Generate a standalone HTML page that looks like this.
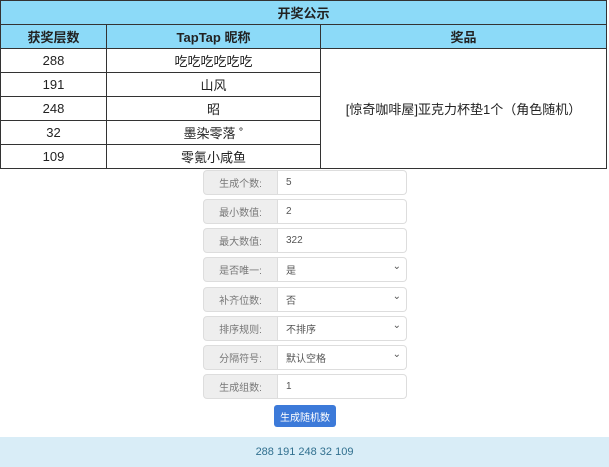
<!DOCTYPE html>
<html><head><meta charset="utf-8"><style>
*{box-sizing:border-box;margin:0;padding:0}
body{width:609px;height:467px;background:#fff;font-family:"Liberation Sans","Noto Sans CJK SC",sans-serif;position:relative;overflow:hidden}
table{position:absolute;left:0;top:0;width:607px;border-collapse:collapse;font-size:13px;color:#222}
td,th{border:1px solid #333;text-align:center;height:24px;padding:0}
th{background:#8cdaf8;font-weight:bold}
.f{position:absolute;left:203px;width:204px;height:25px;display:flex;font-size:10px;color:#555}
.l{width:75px;background:#eee;border:1px solid #ddd;border-radius:4px 0 0 4px;display:flex;align-items:center;justify-content:center;color:#777}
.v{flex:1;border:1px solid #ddd;border-left:none;border-radius:0 4px 4px 0;display:flex;align-items:center;padding-left:8px;position:relative}
.s::after{content:"⌄";position:absolute;right:5px;top:3px;font-size:10px}
.btn{position:absolute;left:274px;top:405px;width:62px;height:22px;background:#3c7ad9;color:#fff;font-size:10px;border-radius:3px;display:flex;align-items:center;justify-content:center}
.bar{position:absolute;left:0;top:437px;width:609px;height:30px;background:#d9edf7;color:#31708f;display:flex;align-items:center;justify-content:center;font-size:11px}
</style></head><body>
<table>
<tr><th colspan="3" style="height:24px">开奖公示</th></tr>
<tr><th style="width:106px;height:23px">获奖层数</th><th style="width:214px">TapTap 昵称</th><th>奖品</th></tr>
<tr><td>288</td><td>吃吃吃吃吃吃</td><td rowspan="5">[惊奇咖啡屋]亚克力杯垫1个（角色随机）</td></tr>
<tr><td>191</td><td>山风</td></tr>
<tr><td>248</td><td>昭</td></tr>
<tr><td>32</td><td>墨染零落 ˚</td></tr>
<tr><td>109</td><td>零氪小咸鱼</td></tr>
</table>
<div class="f" style="top:170px"><div class="l">生成个数:</div><div class="v">5</div></div>
<div class="f" style="top:199px"><div class="l">最小数值:</div><div class="v">2</div></div>
<div class="f" style="top:228px"><div class="l">最大数值:</div><div class="v">322</div></div>
<div class="f" style="top:257px"><div class="l">是否唯一:</div><div class="v s">是</div></div>
<div class="f" style="top:287px"><div class="l">补齐位数:</div><div class="v s">否</div></div>
<div class="f" style="top:316px"><div class="l">排序规则:</div><div class="v s">不排序</div></div>
<div class="f" style="top:345px"><div class="l">分隔符号:</div><div class="v s">默认空格</div></div>
<div class="f" style="top:374px"><div class="l">生成组数:</div><div class="v">1</div></div>
<div class="btn">生成随机数</div>
<div class="bar">288 191 248 32 109</div>
</body></html>
